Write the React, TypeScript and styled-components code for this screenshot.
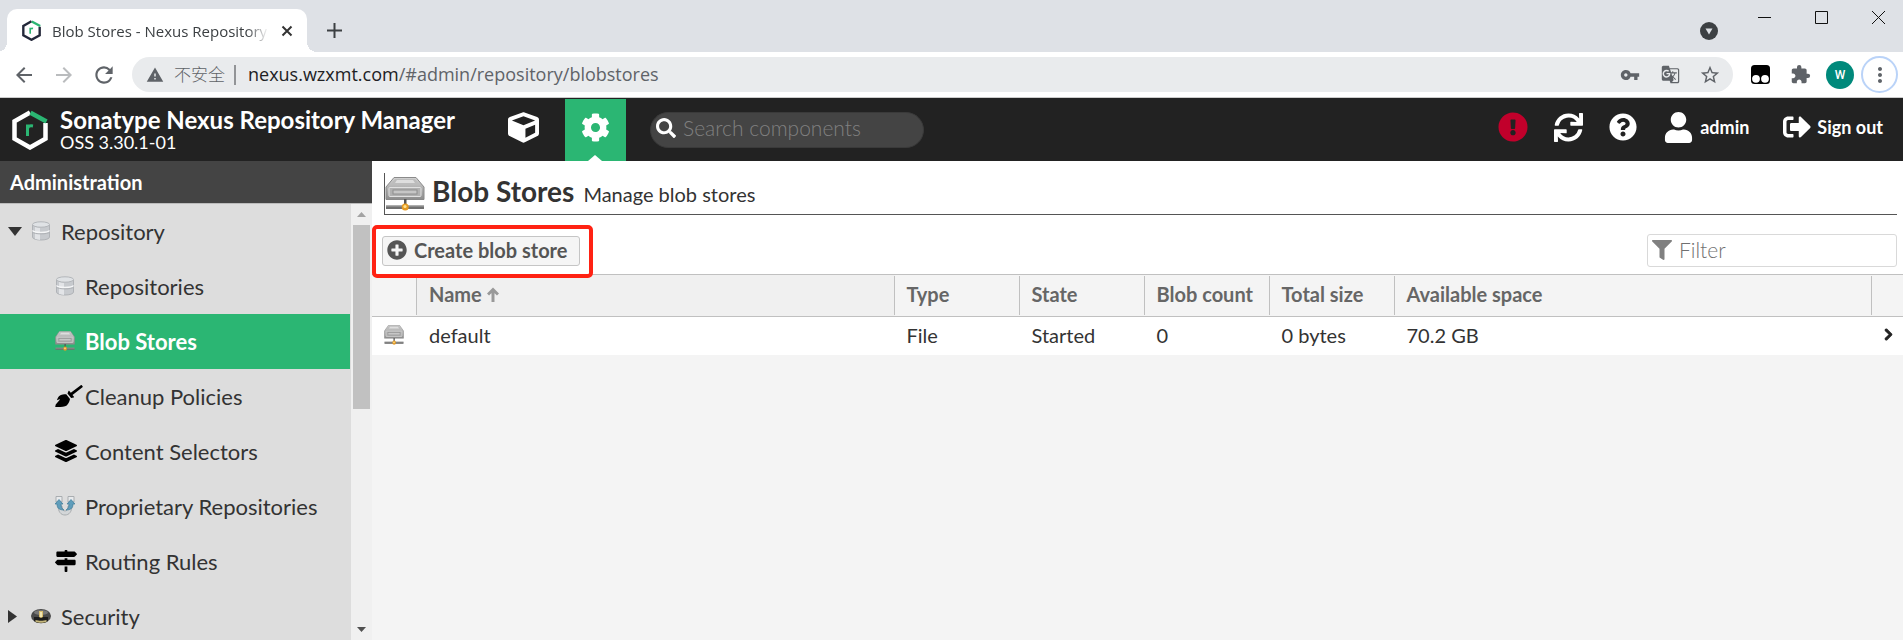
import React from "react";
import styled, { createGlobalStyle, css } from "styled-components";
import {
  FaBroom,
  FaChevronRight,
  FaCog,
  FaCube,
  FaExclamationCircle,
  FaFilter,
  FaLayerGroup,
  FaMapSigns,
  FaPlusCircle,
  FaQuestionCircle,
  FaSearch,
  FaSignOutAlt,
  FaSync,
  FaUser,
} from "react-icons/fa";
import {
  MdArrowBack,
  MdArrowForward,
  MdExtension,
  MdGTranslate,
  MdMoreVert,
  MdRefresh,
  MdStarBorder,
  MdVpnKey,
  MdWarning,
} from "react-icons/md";

const appFont = `Lato, "Liberation Sans", sans-serif`;
const chromeFont = `"Open Sans", "Noto Sans CJK SC", sans-serif`;

const GlobalStyle = createGlobalStyle`
  * { box-sizing: border-box; }
  body {
    margin: 0;
    background: #f4f4f4;
    color: #333;
    font-family: ${appFont};
    font-size: 20px;
  }
  button, input { font: inherit; color: inherit; }
  button { padding: 0; border: 0; background: none; cursor: pointer; }
  a { color: inherit; text-decoration: none; }
  svg { display: block; flex: none; }
`;

/* ---------- browser window ---------- */

const Page = styled.div`
  display: flex;
  flex-direction: column;
  height: 100vh;
`;

const TabStrip = styled.div`
  display: flex;
  align-items: flex-end;
  height: 52px;
  padding-left: 7px;
  background: #dee1e6;
  font-family: ${chromeFont};
`;

const Tab = styled.div`
  position: relative;
  display: flex;
  align-items: center;
  width: 300px;
  height: 43px;
  padding: 0 14px 0 15px;
  border-radius: 10px 10px 0 0;
  background: #fff;
  &::before,
  &::after {
    content: "";
    position: absolute;
    bottom: 0;
    width: 10px;
    height: 10px;
  }
  &::before {
    right: 100%;
    background: radial-gradient(circle at 0 0, transparent 10px, #fff 10px);
  }
  &::after {
    left: 100%;
    background: radial-gradient(circle at 100% 0, transparent 10px, #fff 10px);
  }
`;

const TabTitle = styled.span`
  flex: 1;
  margin: 0 8px 0 11px;
  overflow: hidden;
  white-space: nowrap;
  font-size: 15px;
  line-height: 22px;
  color: #3c4043;
  mask-image: linear-gradient(to right, #000 88%, transparent 98%);
`;

const IconButton = styled.button<{ $size?: number; $color?: string }>`
  display: flex;
  align-items: center;
  justify-content: center;
  flex: none;
  width: ${(p) => p.$size ?? 40}px;
  height: ${(p) => p.$size ?? 40}px;
  color: ${(p) => p.$color ?? "#5f6368"};
`;

const NewTabSlot = styled.div`
  display: flex;
  flex: 1;
  padding: 0 0 2px 7px;
`;

const WindowButtons = styled.div`
  display: flex;
  align-self: flex-start;
  gap: 44px;
  padding: 11px 18px 0 0;
`;

const WindowButton = styled.button`
  display: flex;
  color: #111;
`;

const TabSearch = styled(IconButton)`
  margin: 0 29px 1px 0;
`;

const BrowserBar = styled.div`
  display: flex;
  align-items: center;
  flex: none;
  height: 46px;
  padding: 0 5px 0 4px;
  border-bottom: 1px solid #ccc;
  background: #fff;
  font-family: ${chromeFont};
`;

const AddressBar = styled.div`
  display: flex;
  align-items: center;
  flex: 1;
  height: 35px;
  margin: 0 7px 0 8px;
  padding: 0 3px 0 14px;
  border-radius: 18px;
  background: #e9ebed;
  color: #5f6368;
`;

const Insecure = styled.span`
  margin: 0 7px 0 10px;
  padding-right: 9px;
  border-right: 2px solid #929497;
  font-size: 17px;
  font-weight: 300;
  line-height: 20px;
`;

const AddressText = styled.a`
  flex: 1;
  margin-left: 5px;
  padding-bottom: 1px;
  font-size: 18px;
  line-height: 26px;
  b { font-weight: 400; color: #202124; }
`;

const Avatar = styled.span`
  display: flex;
  align-items: center;
  justify-content: center;
  width: 28px;
  height: 28px;
  border-radius: 50%;
  background: #00897b;
  color: #fff;
  font-family: Roboto, sans-serif;
  font-size: 12px;
  font-weight: 500;
`;

const MenuRing = styled(IconButton)`
  border: 2px solid #bad3f8;
  border-radius: 50%;
  margin-left: 1px;
`;

/* ---------- application header ---------- */

const Header = styled.header`
  display: flex;
  align-items: center;
  flex: none;
  height: 63px;
  padding: 0 20px 0 12px;
  background: #222;
  color: #fff;
`;

const Brand = styled.div`
  width: 433px;
  margin-left: 12px;
  padding-bottom: 1px;
`;

const BrandName = styled.div`
  font-size: 24px;
  font-weight: 700;
  line-height: 26px;
  white-space: nowrap;
`;

const BrandVersion = styled.div`
  font-size: 18px;
  line-height: 19px;
`;

const ModeButton = styled.button<{ $active?: boolean }>`
  position: relative;
  display: flex;
  align-items: center;
  justify-content: center;
  align-self: flex-end;
  width: 61px;
  height: 62px;
  margin-left: ${(p) => (p.$active ? 11 : 0)}px;
  padding-bottom: 5px;
  ${(p) =>
    p.$active &&
    css`
      background: #2bb673;
      &::after {
        content: "";
        position: absolute;
        bottom: 0;
        left: 23px;
        border: 7px solid transparent;
        border-top: 0;
        border-bottom: 6px solid #fff;
      }
    `}
`;

const HeaderSearch = styled.label`
  display: flex;
  align-items: center;
  width: 274px;
  height: 36px;
  margin-left: 24px;
  padding: 0 16px 4px 5px;
  border: 1px solid #3a3a3a;
  border-radius: 18px;
  background: #444;
`;

const BareInput = styled.input<{ $placeholder: string }>`
  flex: 1;
  min-width: 0;
  margin-left: 7px;
  padding: 0;
  border: 0;
  outline: 0;
  background: none;
  font-size: 21px;
  font-weight: 300;
  line-height: 24px;
  &::placeholder { color: ${(p) => p.$placeholder}; opacity: 1; }
`;

const HeaderActions = styled.nav`
  display: flex;
  align-items: center;
  gap: 26px;
  margin-left: auto;
  padding-bottom: 5px;
  font-size: 18px;
  font-weight: 700;
  white-space: nowrap;
`;

const HeaderAction = styled.button`
  display: flex;
  align-items: center;
  gap: 6px;
  font-weight: 700;
  & + & { margin-left: 8px; }
`;

const HeaderIcon = styled.button<{ $color?: string }>`
  display: flex;
  color: ${(p) => p.$color ?? "#fff"};
`;

/* ---------- body ---------- */

const Body = styled.div`
  display: flex;
  flex: 1;
  min-height: 0;
`;

const Sidebar = styled.aside`
  display: flex;
  flex-direction: column;
  flex: none;
  width: 372px;
`;

const SidebarTitle = styled.h2`
  flex: none;
  margin: 0;
  padding: 0 10px;
  border-bottom: 1px solid #bbb;
  background: #444;
  color: #fff;
  font-size: 20px;
  font-weight: 700;
  line-height: 42px;
`;

const TreeArea = styled.div`
  display: flex;
  flex: 1;
  min-height: 0;
`;

const Tree = styled.nav`
  flex: 1;
  overflow: hidden;
  background: #ddd;
`;

const TreeItem = styled.a<{ $level: 1 | 2; $selected?: boolean }>`
  display: flex;
  align-items: center;
  height: 55px;
  padding: 0 0 1px ${(p) => (p.$level === 1 ? 8 : 55)}px;
  margin-right: 1px;
  font-size: 22px;
  white-space: nowrap;
  ${(p) =>
    p.$selected &&
    css`
      background: #2bb673;
      color: #fff;
      font-weight: 700;
    `}
`;

const TreeArrow = styled.span`
  width: 23px;
  color: #333;
`;

const TreeIcon = styled.span`
  width: 30px;
  color: #000;
`;

const BroomIcon = styled(FaBroom)`
  width: 28px;
  height: 22px;
`;

const ScrollTrack = styled.div`
  display: flex;
  flex-direction: column;
  align-items: center;
  width: 21px;
  background: #f0f0f0;
`;

const ScrollThumb = styled.div`
  width: 17px;
  height: 184px;
  background: #c1c1c1;
`;

const ScrollArrow = styled.span<{ $end?: boolean }>`
  display: flex;
  align-items: center;
  height: 21px;
  margin-top: ${(p) => (p.$end ? "auto" : "0")};
  color: ${(p) => (p.$end ? "#505050" : "#a3a3a3")};
`;

const Main = styled.main`
  flex: 1;
  min-width: 0;
`;

const ContentTop = styled.section`
  padding: 12px 6px 0 12px;
  background: #fff;
`;

const FeatureHead = styled.div`
  display: flex;
  align-items: center;
  height: 42px;
  border: solid #555;
  border-width: 0 0 1px 1px;
`;

const FeatureText = styled.div`
  display: flex;
  align-items: baseline;
  gap: 9px;
  margin-left: 7px;
  padding-bottom: 6px;
`;

const FeatureTitle = styled.h1`
  margin: 0;
  font-size: 28px;
  font-weight: 700;
  line-height: 34px;
`;

const FeatureNote = styled.span`
  font-size: 20px;
  line-height: 24px;
`;

const Toolbar = styled.div`
  display: flex;
  align-items: center;
  justify-content: space-between;
  height: 59px;
  padding-top: 12px;
`;

const Marked = styled.div`
  position: relative;
  margin-left: -2px;
  &::after {
    content: "";
    position: absolute;
    inset: -11px -13px -12px -10px;
    border: 4px solid #ff2213;
    border-radius: 5px;
    pointer-events: none;
  }
`;

const CreateButton = styled.button`
  display: flex;
  align-items: center;
  gap: 7px;
  height: 30px;
  padding: 0 12px 1px 4px;
  border: 1px solid #c5c5c5;
  border-radius: 3px;
  background: #f5f5f5;
  color: #555;
  font-size: 20px;
  font-weight: 700;
  line-height: 24px;
`;

const FilterBox = styled.label`
  display: flex;
  align-items: center;
  width: 250px;
  height: 33px;
  padding: 0 5px 2px 4px;
  border: 1px solid #d9d9d9;
  border-radius: 3px;
  color: #808080;
`;

const Grid = styled.table`
  width: 100%;
  table-layout: fixed;
  border-collapse: separate;
  border-spacing: 0;
`;

const HeadCell = styled.th<{ $sorted?: boolean }>`
  height: 43px;
  padding: 0;
  border: solid #c0c0c0;
  border-width: 1px 0;
  background: ${(p) => (p.$sorted ? "#f0f0f0" : "#f4f4f4")};
  color: #666;
  font-size: 20px;
  font-weight: 700;
  text-align: left;
  white-space: nowrap;
`;

const HeadLabel = styled.div<{ $last?: boolean }>`
  display: flex;
  align-items: center;
  gap: 5px;
  height: 39px;
  padding: 0 0 3px 12px;
  border-right: ${(p) => (p.$last ? "0" : "1px solid #c0c0c0")};
`;

const Cell = styled.td`
  height: 38px;
  padding: 0 0 3px 12px;
  background: #fff;
  font-size: 20px;
  line-height: 24px;
  white-space: nowrap;
  &:last-child { padding-left: 10px; }
`;

/* ---------- drawings ---------- */

const HexLogo = ({ size, ring }: { size: number; ring: string }) => (
  <svg width={size} height={(size * 40) / 36} viewBox="0 0 36 40" fill="none" strokeWidth="4.500">
    <path d="M18 2.500 2.500 11.300v17.500L18 37.500 33.500 28.800V13" stroke={ring} />
    <path d="M18.500 2.700 34.500 11.500" stroke="#2bb673" />
    <path d="M15.500 26V14.500M15.500 19c.5-3 2.500-3.500 5.500-3" stroke="#2bb673" strokeWidth="3" />
  </svg>
);

const DriveIcon = ({ width, height }: { width: number; height: number }) => (
  <svg width={width} height={height} viewBox="0 0 40 34" preserveAspectRatio="none">
    <defs>
      <linearGradient id="drive-face" x1="0" y1="0" x2="0" y2="1">
        <stop offset="0" stopColor="#d2d2d2" />
        <stop offset="1" stopColor="#8d8d8d" />
      </linearGradient>
    </defs>
    <path d="M9 .5h22l8 9.500v12.500H1V10z" fill="url(#drive-face)" stroke="#8a8a8a" />
    <path d="M10 2h20l4 5H6z" fill="#bdbdbd" />
    <path d="M12 3h16l2 3H10z" fill="#dedede" />
    <rect x="4" y="10.500" width="32" height="9" rx="1" fill="#b1b1b1" stroke="#e0e0e0" />
    <rect x="8" y="13" width="24" height="4" fill="#c6c6c6" stroke="#8e8e8e" />
    <path d="M19 22h2.500v7H19z" fill="#555" />
    <path d="M1 28.500h38v3.500H1z" fill="#707070" />
    <path d="M1 28.500h38v1H1z" fill="#a5a5a5" />
    <circle cx="20.200" cy="30" r="3.500" fill="#e59a22" />
    <circle cx="20" cy="29.500" r="1.600" fill="#ffe08a" />
  </svg>
);

const DatabaseIcon = () => (
  <svg width="20" height="20" viewBox="0 0 20 20">
    <path d="M1.500 4v12c0 4 17 4 17 0V4z" fill="#c7cace" stroke="#b0b3b7" />
    <path d="M4 6v12l5 1V7z" fill="#e2e4e7" />
    <ellipse cx="10" cy="3.500" rx="8.500" ry="2.700" fill="#dfe2e5" stroke="#b3b6ba" />
    <path d="M1.500 9.500c1 2.500 16 2.500 17 0" fill="none" stroke="#f5f6f7" strokeWidth="1.500" />
    <path d="M1.500 11c1 2.500 16 2.500 17 0" fill="none" stroke="#aeb1b5" />
  </svg>
);

const ProprietaryIcon = () => (
  <svg width="20" height="20" viewBox="0 0 20 20">
    <path d="M3 9c0 7 3 10 7 10s7-3 7-10l-4 1c0 3-1 5-3 5s-3-2-3-5z" fill="#d3d6d8" stroke="#a9adb0" />
    <path d="M1 .5h6V6H1zM13 .5h6V6h-6z" fill="#e8eaec" stroke="#a9adb0" />
    <path d="M4 3.500 8 8H6c0 3 1 5 3 6-5 0-7-2-7-6H0z" fill="#5f9dbb" stroke="#3f7b98" strokeWidth=".7" />
    <path d="M16 3.500 12 8h2c0 3-1 5-3 6 5 0 7-2 7-6h2z" fill="#5f9dbb" stroke="#3f7b98" strokeWidth=".7" />
  </svg>
);

const SecurityIcon = () => (
  <svg width="20" height="20" viewBox="0 0 20 20">
    <ellipse cx="10" cy="10" rx="10" ry="7" fill="#4a4a4a" />
    <ellipse cx="10" cy="6.500" rx="7" ry="2.500" fill="#777" />
    <path d="M3 11h14v4c-3 3-11 3-14 0z" fill="#1d1d1d" />
    <path d="M4.500 14c3 1 8 1 11 0v2c-3 1-8 1-11 0z" fill="#c5b77c" />
    <path d="M8 5h4v6l-2 1-2-1z" fill="#d8bd6b" />
    <path d="M9.200 6h1.600v5H9.200z" fill="#f7efc6" />
  </svg>
);

const Triangle = ({ dir, width, height }: { dir: "up" | "down" | "right"; width: number; height: number }) => {
  const points = { up: "0,10 5,0 10,10", down: "0,0 10,0 5,10", right: "0,0 10,5 0,10" }[dir];
  return (
    <svg width={width} height={height} viewBox="0 0 10 10" preserveAspectRatio="none">
      <polygon points={points} fill="currentColor" />
    </svg>
  );
};

const SortArrow = () => (
  <svg width="12" height="15" viewBox="0 0 12 15" fill="none" stroke="#999" strokeWidth="3">
    <path d="M6 15V3M1 7.500l5-5 5 5" />
  </svg>
);

const TampermonkeyIcon = () => (
  <svg width="19" height="19" viewBox="0 0 19 19">
    <rect width="19" height="19" rx="3.500" fill="#000" />
    <circle cx="5" cy="13.800" r="3.900" fill="#fff" />
    <circle cx="14" cy="13.800" r="3.900" fill="#fff" />
  </svg>
);

/* ---------- page ---------- */

const treeItems: { label: string; icon: React.ReactNode; selected?: boolean }[] = [
  { label: "Repositories", icon: <DatabaseIcon /> },
  { label: "Blob Stores", icon: <DriveIcon width={20} height={20} />, selected: true },
  { label: "Cleanup Policies", icon: <BroomIcon /> },
  { label: "Content Selectors", icon: <FaLayerGroup size={22} /> },
  { label: "Proprietary Repositories", icon: <ProprietaryIcon /> },
  { label: "Routing Rules", icon: <FaMapSigns size={22} /> },
];

const columns = [
  { label: "Type", value: "File" },
  { label: "State", value: "Started" },
  { label: "Blob count", value: "0" },
  { label: "Total size", value: "0 bytes" },
];

export default function App() {
  return (
    <Page>
      <GlobalStyle />
      <TabStrip>
        <Tab>
          <HexLogo size={19} ring="#23283a" />
          <TabTitle>Blob Stores - Nexus Repository</TabTitle>
          <IconButton $size={12} aria-label="Close tab">
            <svg width="12" height="12" viewBox="0 0 12 12" stroke="#333" strokeWidth="2">
              <path d="m1.500 1.500 9 9M10.500 1.500l-9 9" />
            </svg>
          </IconButton>
        </Tab>
        <NewTabSlot>
          <IconButton aria-label="New tab">
            <svg width="15" height="15" viewBox="0 0 15 15" stroke="#3c4043" strokeWidth="2">
              <path d="M7.500 0v15M0 7.500h15" />
            </svg>
          </IconButton>
        </NewTabSlot>
        <TabSearch aria-label="Search tabs">
          <svg width="18" height="18" viewBox="0 0 18 18">
            <circle cx="9" cy="9" r="9" fill="#3c4043" />
            <path d="M5.500 6.500h7L9 12.500z" fill="#dee1e6" />
          </svg>
        </TabSearch>
        <WindowButtons>
          <WindowButton aria-label="Minimize">
            <svg width="13" height="13" viewBox="0 0 13 13" stroke="currentColor">
              <path d="M0 6.500h13" />
            </svg>
          </WindowButton>
          <WindowButton aria-label="Maximize">
            <svg width="13" height="13" viewBox="0 0 13 13" stroke="currentColor" fill="none">
              <path d="M.5.5h12v12H.5z" />
            </svg>
          </WindowButton>
          <WindowButton aria-label="Close">
            <svg width="13" height="13" viewBox="0 0 13 13" stroke="currentColor">
              <path d="m0 0 13 13M13 0 0 13" />
            </svg>
          </WindowButton>
        </WindowButtons>
      </TabStrip>
      <BrowserBar>
        <IconButton aria-label="Back"><MdArrowBack size={24} /></IconButton>
        <IconButton aria-label="Forward" $color="#babcbe"><MdArrowForward size={24} /></IconButton>
        <IconButton aria-label="Reload"><MdRefresh size={26} /></IconButton>
        <AddressBar>
          <MdWarning size={18} />
          <Insecure>不安全</Insecure>
          <AddressText href="#admin/repository/blobstores">
            <b>nexus.wzxmt.com</b>/#admin/repository/blobstores
          </AddressText>
          <IconButton aria-label="Saved passwords"><MdVpnKey size={20} /></IconButton>
          <IconButton aria-label="Translate"><MdGTranslate size={19} /></IconButton>
          <IconButton aria-label="Bookmark"><MdStarBorder size={22} /></IconButton>
        </AddressBar>
        <IconButton aria-label="Tampermonkey"><TampermonkeyIcon /></IconButton>
        <IconButton aria-label="Extensions"><MdExtension size={21} /></IconButton>
        <IconButton aria-label="Profile"><Avatar>W</Avatar></IconButton>
        <MenuRing $size={37} aria-label="Menu"><MdMoreVert size={24} /></MenuRing>
      </BrowserBar>

      <Header>
        <HexLogo size={36} ring="#fff" />
        <Brand>
          <BrandName>Sonatype Nexus Repository Manager</BrandName>
          <BrandVersion>OSS 3.30.1-01</BrandVersion>
        </Brand>
        <ModeButton aria-label="Browse"><FaCube size={31} /></ModeButton>
        <ModeButton $active aria-label="Administration"><FaCog size={29} /></ModeButton>
        <HeaderSearch>
          <FaSearch size={20} />
          <BareInput $placeholder="#808080" placeholder="Search components" aria-label="Search components" />
        </HeaderSearch>
        <HeaderActions>
          <HeaderIcon $color="#c1002b" aria-label="Alerts"><FaExclamationCircle size={30} /></HeaderIcon>
          <HeaderIcon aria-label="Refresh"><FaSync size={29} /></HeaderIcon>
          <HeaderIcon aria-label="Help"><FaQuestionCircle size={28} /></HeaderIcon>
          <HeaderAction><FaUser size={31} />admin</HeaderAction>
          <HeaderAction><FaSignOutAlt size={28} />Sign out</HeaderAction>
        </HeaderActions>
      </Header>

      <Body>
        <Sidebar>
          <SidebarTitle>Administration</SidebarTitle>
          <TreeArea>
            <Tree>
              <TreeItem href="#repository" $level={1}>
                <TreeArrow><Triangle dir="down" width={14} height={9} /></TreeArrow>
                <TreeIcon><DatabaseIcon /></TreeIcon>
                Repository
              </TreeItem>
              {treeItems.map((item) => (
                <TreeItem key={item.label} href="#item" $level={2} $selected={item.selected}>
                  <TreeIcon>{item.icon}</TreeIcon>
                  {item.label}
                </TreeItem>
              ))}
              <TreeItem href="#security" $level={1}>
                <TreeArrow><Triangle dir="right" width={9} height={13} /></TreeArrow>
                <TreeIcon><SecurityIcon /></TreeIcon>
                Security
              </TreeItem>
            </Tree>
            <ScrollTrack>
              <ScrollArrow><Triangle dir="up" width={9} height={5} /></ScrollArrow>
              <ScrollThumb />
              <ScrollArrow $end><Triangle dir="down" width={9} height={5} /></ScrollArrow>
            </ScrollTrack>
          </TreeArea>
        </Sidebar>

        <Main>
          <ContentTop>
            <FeatureHead>
              <DriveIcon width={40} height={34} />
              <FeatureText>
                <FeatureTitle>Blob Stores</FeatureTitle>
                <FeatureNote>Manage blob stores</FeatureNote>
              </FeatureText>
            </FeatureHead>
            <Toolbar>
              <Marked>
                <CreateButton><FaPlusCircle size={20} />Create blob store</CreateButton>
              </Marked>
              <FilterBox>
                <FaFilter size={20} />
                <BareInput $placeholder="#707070" placeholder="Filter" aria-label="Filter" />
              </FilterBox>
            </Toolbar>
          </ContentTop>
          <Grid>
            <colgroup>
              <col width="45" />
              <col />
              {columns.map((c) => <col key={c.label} width="125" />)}
              <col />
              <col width="31" />
            </colgroup>
            <thead>
              <tr>
                <HeadCell><HeadLabel /></HeadCell>
                <HeadCell $sorted><HeadLabel>Name<SortArrow /></HeadLabel></HeadCell>
                {columns.map((c) => (
                  <HeadCell key={c.label}><HeadLabel>{c.label}</HeadLabel></HeadCell>
                ))}
                <HeadCell><HeadLabel>Available space</HeadLabel></HeadCell>
                <HeadCell><HeadLabel $last /></HeadCell>
              </tr>
            </thead>
            <tbody>
              <tr>
                <Cell><DriveIcon width={20} height={20} /></Cell>
                <Cell>default</Cell>
                {columns.map((c) => <Cell key={c.label}>{c.value}</Cell>)}
                <Cell>70.2 GB</Cell>
                <Cell><FaChevronRight size={13} color="#222" stroke="#222" strokeWidth={40} /></Cell>
              </tr>
            </tbody>
          </Grid>
        </Main>
      </Body>
    </Page>
  );
}
